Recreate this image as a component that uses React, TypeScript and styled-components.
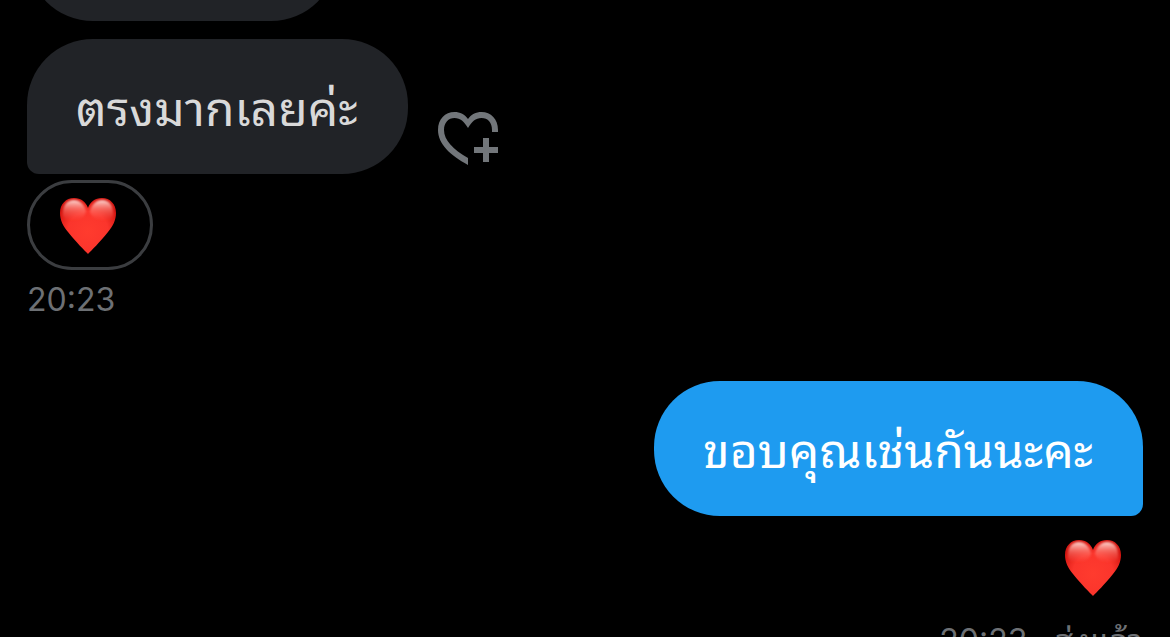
import React from "react";
import styled, { createGlobalStyle } from "styled-components";

const GlobalStyle = createGlobalStyle`
  * { box-sizing: border-box; }
  body {
    margin: 0;
    background: #000;
    overflow: hidden;
    font-family: Inter, "Noto Sans Thai Looped", "Noto Looped Thai", Loma, Laksaman, Umpush, Garuda, Waree, "Noto Sans Thai", sans-serif;
  }
`;

type Side = "in" | "out";

const Viewport = styled.main`
  height: 100vh;
  overflow: hidden;
  background: #000;
`;

/* The thread is scrolled, so its first message is partly out of view. */
const Thread = styled.div`
  display: flex;
  flex-direction: column;
  margin-top: -114px;
  padding: 0 27px;
`;

const Message = styled.section<{ $side: Side }>`
  display: flex;
  flex-direction: column;
  align-items: ${(p) => (p.$side === "in" ? "flex-start" : "flex-end")};
  margin-top: ${(p) => (p.$side === "in" ? "18px" : "59px")};
`;

const BubbleRow = styled.div`
  display: flex;
  align-items: flex-end;
  gap: 30px;
`;

const Bubble = styled.div<{ $side: Side }>`
  display: flex;
  align-items: center;
  min-height: 135px;
  padding: 4px 50px 0 49px;
  border-radius: ${(p) => (p.$side === "in" ? "66px 66px 66px 12px" : "66px 66px 12px 66px")};
  background: ${(p) => (p.$side === "in" ? "#212327" : "#1e9bf0")};
  color: ${(p) => (p.$side === "in" ? "#d9d9d9" : "#fff")};
  font-size: 48px;
  line-height: 72px;
  white-space: nowrap;
`;

const EarlierBubble = styled(Bubble)`
  width: 310px;
  border-radius: 66px;
`;

const ReactButton = styled.button`
  display: flex;
  margin: 0 0 8px;
  padding: 0;
  border: 0;
  background: none;
  color: #72767a;
`;

const ReactionPill = styled.button`
  display: flex;
  align-items: center;
  justify-content: center;
  width: 126px;
  height: 90px;
  margin: 6px 0 0;
  padding: 2px 4px 0 0;
  border: 3px solid #3b3d40;
  border-radius: 45px;
  background: none;
`;

const SentReaction = styled.div`
  display: flex;
  padding: 23px 21px 0 0;
`;

const Meta = styled.div`
  margin-top: 8px;
  color: #6d7074;
  font-size: 32px;
  line-height: 44px;
  white-space: pre;
`;

const SentMeta = styled(Meta)`
  margin-top: 22px;
`;

const HeartPlus = () => (
  <svg width="60" height="54" viewBox="0 0 60 54" fill="none" aria-hidden="true">
    <path
      d="M30 53C12 43 0 32 0 18C0 7 7 0 16.500 0C22 0 27 2.500 30 7C33 2.500 38 0 43.500 0C53 0 60 7 60 18V20H54V18C54 10.500 50 6 43.500 6C37.500 6 34 9.500 30 16C26 9.500 22.500 6 16.500 6C10.500 6 6 10.500 6 18C6 28 15 37.500 30 46Z"
      fill="currentColor"
    />
    <path d="M45 26h6v9h9v6h-9v9h-6v-9h-9v-6h9z" fill="currentColor" />
  </svg>
);

const RedHeart = ({ id }: { id: string }) => (
  <svg width="58" height="58" viewBox="0 0 58 58" role="img" aria-label="Red heart">
    <defs>
      <radialGradient id={`${id}-body`} cx="0.5" cy="0.6" r="0.6">
        <stop offset="0" stopColor="#ff3b2e" />
        <stop offset="0.6" stopColor="#fb352c" />
        <stop offset="1" stopColor="#d3140f" />
      </radialGradient>
      <linearGradient id={`${id}-shine`} x1="0" y1="0" x2="0" y2="1">
        <stop offset="0" stopColor="#ffe4de" stopOpacity="0.95" />
        <stop offset="0.45" stopColor="#ff8a80" stopOpacity="0.6" />
        <stop offset="1" stopColor="#ff5a4c" stopOpacity="0" />
      </linearGradient>
      <filter id={`${id}-soft`} x="-20%" y="-20%" width="140%" height="140%">
        <feGaussianBlur stdDeviation="1.2" />
      </filter>
    </defs>
    <path
      d="M29 57C26 54 17 45 9 35C4 29 1 23 1 16C1 7 7 1 15 1C22 1 27 5 29 11C31 5 36 1 43 1C51 1 57 7 57 16C57 23 54 29 49 35C41 45 32 54 29 57Z"
      fill={`url(#${id}-body)`}
    />
    <g fill={`url(#${id}-shine)`} filter={`url(#${id}-soft)`}>
      <path d="M4 19C3 8 8 3 15 3C21 3 25 7 27 14C26 24 8 28 4 19Z" />
      <path d="M31 14C33 7 37 3 43 3C50 3 55 8 54 19C50 28 32 24 31 14Z" />
    </g>
  </svg>
);

export default function App() {
  return (
    <>
      <GlobalStyle />
      <Viewport>
        <Thread>
          <EarlierBubble $side="in" />
          <Message $side="in">
            <BubbleRow>
              <Bubble $side="in" lang="th">ตรงมากเลยค่ะ</Bubble>
              <ReactButton type="button" aria-label="Add reaction">
                <HeartPlus />
              </ReactButton>
            </BubbleRow>
            <ReactionPill type="button">
              <RedHeart id="received" />
            </ReactionPill>
            <Meta>20:23</Meta>
          </Message>
          <Message $side="out">
            <Bubble $side="out" lang="th">ขอบคุณเช่นกันนะคะ</Bubble>
            <SentReaction>
              <RedHeart id="sent" />
            </SentReaction>
            <SentMeta lang="th">20:23 · ส่งแล้ว</SentMeta>
          </Message>
        </Thread>
      </Viewport>
    </>
  );
}
